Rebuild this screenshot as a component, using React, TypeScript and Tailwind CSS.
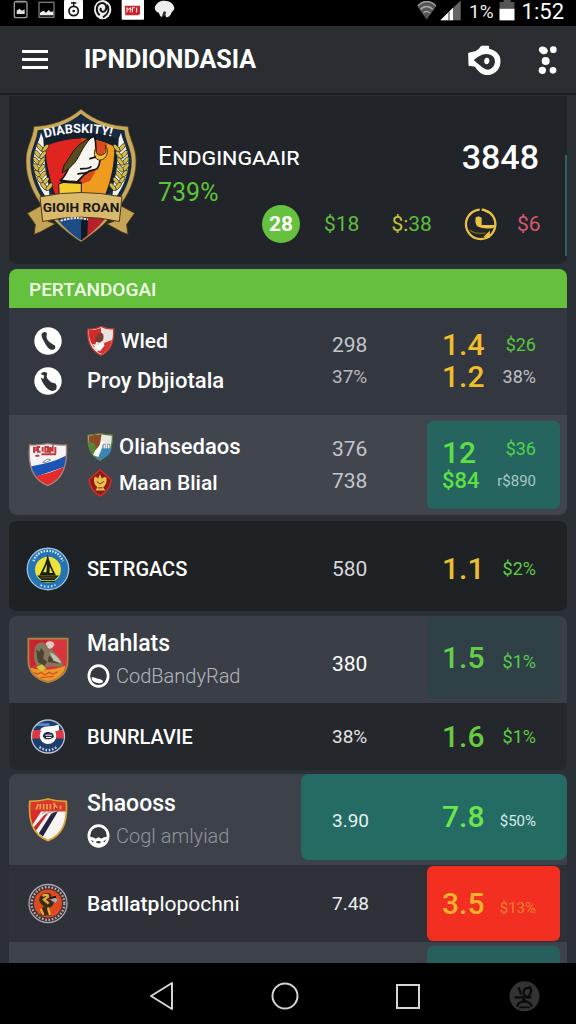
import type { ReactNode } from "react";
import clsx from "clsx";

/* ---------- status bar ---------- */

function StatusBar() {
  return (
    <div className="flex h-[26px] shrink-0 items-start justify-between bg-black px-3 text-white">
      <svg viewBox="36 0 492 60" className="h-5 w-[164px]" aria-hidden>
        <rect x="43" y="4" width="38" height="49" rx="6" fill="none" stroke="#9a9a9a" strokeWidth="4" />
        <path d="M48 8h28" stroke="#666" strokeWidth="3" />
        <path d="M50 42V32l8-6 8 6 8-4v14z" fill="#ddd" />
        <rect x="117" y="7" width="45" height="45" fill="none" stroke="#777" strokeWidth="4" />
        <path d="M120 46v-8l10-6 8 6 8-8 6 6 8-2v12z" fill="#eee" />
        <rect x="192" y="0" width="57" height="57" rx="3" fill="#fff" />
        <circle cx="221" cy="33" r="14" fill="none" stroke="#111" strokeWidth="5" />
        <circle cx="221" cy="33" r="4" fill="#111" />
        <path d="M221 18V5M213 9h16" stroke="#111" strokeWidth="4" />
        <ellipse cx="308" cy="29" rx="26" ry="29" fill="#eee" />
        <path d="M299 46c-14-13-10-34 6-37 14-1 18 16 10 24-9 6-16-2-12-9M321 14c9 16 2 30-12 38" fill="none" stroke="#111" strokeWidth="6" />
        <rect x="365" y="-2" width="67" height="61" rx="3" fill="#fff" />
        <path d="M374 17h46v25l-6 4h-38z" fill="#c9252b" />
        <path d="M381 37V23l5 6 5-6v14M397 37V23h7M410 23v14" fill="none" stroke="#fff" strokeWidth="3" />
        <path d="M464 24c3-14 14-22 29-22 16 0 29 9 30 23-1 7-6 9-9 14-2 8-9 14-16 13l-3-13-5 1-4 11c-5-2-8-6-9-13-7-1-12-6-13-14z" fill="#eee" />
        <path d="M487 46l4-12 8 2-5 12z" fill="#333" />
      </svg>

      <div className="flex items-start">
        <svg viewBox="378 0 132 62" className="h-[21px] w-11" aria-hidden>
          <path d="M379 18c15-21 43-21 57 0l-29 40z" fill="#555" />
          <path d="M381 17c14-17 40-17 53 0M389 28c10-12 26-12 36 0M397 39c6-7 14-7 20 0" fill="none" stroke="#aaa" strokeWidth="4" />
          <path d="M448 60L509 1v59z" fill="#666" />
          <path d="M448 60l38-37v37z" fill="#fff" />
          <path d="M474 34v26" stroke="#333" strokeWidth="3" />
        </svg>
        <span className="ml-2 text-[19px] leading-[23px] text-[#eee]">1%</span>
        <svg viewBox="630 0 46 62" className="ml-[5px] h-[21px] w-4" aria-hidden>
          <path d="M643 0h21v6h11v54h-44V6h12z" fill="#555" />
          <path d="M631 26h44v34h-44z" fill="#fff" />
        </svg>
        <span className="ml-[7px] text-[22px] leading-[23px]">1:52</span>
      </div>
    </div>
  );
}

/* ---------- header ---------- */

function Header() {
  return (
    <header className="flex h-[69px] shrink-0 items-center border-b-2 border-[#1b1d21] bg-[#2a2d32] pl-[22px] pr-[18px] text-white">
      <button type="button" aria-label="Menu" className="flex w-[26px] flex-col gap-[5px]">
        <span className="h-[3px] bg-white" />
        <span className="h-[3px] bg-white" />
        <span className="h-[3px] bg-white" />
      </button>
      <h1 className="ml-9 text-[25px] font-bold leading-8">IPNDIONDASIA</h1>
      <button type="button" aria-label="Watch" className="ml-auto">
        <svg viewBox="540 126 104 98" className="h-8 w-[35px]" aria-hidden>
          <path d="M544 155l22-6c8-4 13-9 17-16h21v9c22 6 36 20 35 38-1 25-20 40-42 39-17-1-25-14-33-25l-19-3z" fill="#fff" stroke="#fff" strokeWidth="4" strokeLinejoin="round" />
          <path d="M559 176c12-11 23-18 38-19 16 0 27 9 27 22 0 14-9 25-23 26-14-3-25-16-42-29z" fill="#2a2d32" />
          <path d="M599 168c6 0 9 5 8 11-1 5-4 9-8 9-5 0-9-4-8-10 0-6 4-10 8-10z" fill="#fff" />
        </svg>
      </button>
      <button type="button" aria-label="More" className="ml-9">
        <svg viewBox="750 130 60 90" className="h-[30px] w-5" aria-hidden>
          <g fill="#fff">
            <ellipse cx="766" cy="146" rx="14" ry="11" transform="rotate(25 766 146)" />
            <circle cx="796" cy="144" r="10" />
            <circle cx="773" cy="178" r="12" />
            <circle cx="763" cy="206" r="11" />
            <circle cx="795" cy="206" r="10" />
          </g>
        </svg>
      </button>
    </header>
  );
}

/* ---------- crests ---------- */

const wheat = [
  [120, 172], [113, 192], [109, 212], [109, 232], [113, 252], [121, 271], [132, 288],
] as const;

function WheatEar() {
  return (
    <g fill="#d8bb45" stroke="#1c2531" strokeWidth="2">
      {wheat.map(([x, y]) => (
        <g key={y}>
          <ellipse cx={x} cy={y} rx="6" ry="14" transform={`rotate(-38 ${x} ${y})`} />
          <ellipse cx={x + 16} cy={y + 2} rx="6" ry="14" transform={`rotate(38 ${x + 16} ${y + 2})`} />
        </g>
      ))}
    </g>
  );
}

function ClubCrest() {
  return (
    <svg viewBox="78 54 336 404" className="h-[135px] w-28 shrink-0" aria-label="Club crest">
      <path d="M243 57c-40 34-90 50-141 52-4 40-24 60-24 104 0 104 88 192 165 242 77-50 165-138 165-242 0-44-20-64-24-104-51-2-101-18-141-52z" fill="#c9a85a" stroke="#5d4a20" strokeWidth="2" />
      <path d="M243 71c-40 32-84 46-130 49-4 36-22 56-22 93 0 96 80 178 152 226 72-48 152-130 152-226 0-37-18-57-22-93-46-3-90-17-130-49z" fill="#172a40" />
      <path d="M123 128c-6 30-22 50-22 85 0 50 22 90 50 124l-10-90-9-96zM363 128c6 30 22 50 22 85 0 50-22 90-50 124l10-90 9-96z" fill="#f3f2ec" />
      <path d="M130 148c36-16 77-24 113-24s77 8 113 24l-6 90c-8 60-50 110-107 150-57-40-99-90-107-150z" fill="#15202d" />
      <path d="M137 168c38-16 72-22 106-23v181l-73-2c-18-45-33-104-33-156z" fill="#e02420" />
      <path d="M243 145c34 1 68 8 100 24 0 60-12 107-32 155h-68z" fill="#ef9b20" />
      <path d="M243 145c34 1 60 6 80 16l-18 47-34 64-28 10z" fill="#d94a1c" />
      <path d="M182 270c30-24 26-66 50-94 14-18 30-30 51-38 8 26 2 34 6 54 16 6 12 30 2 44-14 6-22 2-30 12-14 6-20 22-34 30z" fill="#f7f5ef" stroke="#161616" strokeWidth="5" />
      <path d="M192 226c24-32 28-60 82-84-32 32-34 62-58 84-8 8-20 18-30 22z" fill="#5b4c1d" stroke="#161616" strokeWidth="3" />
      <path d="M288 172c-4 22 14 32 30 14l-2-20c12 14 6 42-16 44-16 0-22-20-12-38z" fill="#eec23a" stroke="#4a2c0c" strokeWidth="3" />
      <path d="M240 236c16-2 26 2 34-8M232 252c12-4 20 0 30-6M268 206l20-6" fill="none" stroke="#161616" strokeWidth="5" />
      <path d="M176 282c20-8 42-14 68-4v44h-66z" fill="#f3cd2c" stroke="#161616" strokeWidth="3" />
      <path d="M182 274l62 4" stroke="#161616" strokeWidth="7" />
      <WheatEar />
      <g transform="translate(486 0) scale(-1 1)">
        <WheatEar />
      </g>
      <path d="M122 148q121-40 242 0" fill="none" id="crestArc" />
      <text fill="#fff" fontSize="38" fontWeight="700" fontFamily="Roboto, sans-serif">
        <textPath href="#crestArc" startOffset="14">DIABSKITY!</textPath>
      </text>
      <path d="M160 370l83 15v66c-32-20-60-46-83-81z" fill="#1d4d86" />
      <path d="M326 370l-83 15v66c32-20 60-46 83-81z" fill="#b5202a" />
      <path d="M243 385h21l-2 50-19 16z" fill="#0f1a27" />
      <path d="M82 369l48-26 14 50 22 8-44 24-20 8 4-30zM404 369l-48-26-14 50-22 8 44 24 20 8-4-30z" fill="#c6a456" stroke="#4b3a18" strokeWidth="3" />
      <path d="M120 320q123-26 246 0l-8 74q-115-26-230 0z" fill="#d9b96c" stroke="#4b3a18" strokeWidth="3" />
      <text x="243" y="366" textAnchor="middle" fill="#1a1712" fontSize="41" fontWeight="700" fontFamily="Roboto, sans-serif">GIOIH ROAN</text>
      <path d="M182 392q40-14 82-4" fill="none" stroke="#e9e4dc" strokeWidth="6" strokeDasharray="7 3" />
    </svg>
  );
}

function PhoneBadge({ flip }: { flip?: boolean }) {
  return (
    <svg viewBox="0 0 84 86" className="h-7 w-7" aria-hidden>
      <circle cx="42" cy="43" r="42" fill="#fff" />
      {flip ? (
        <path d="M20 22c6-8 14-8 20-2-2 6-4 10 2 18 6 8 14 12 22 12 6 6 6 14 2 20-8 6-18 4-26-4-8-8-18-22-20-34l8 6 2-12z" fill="#2f3338" />
      ) : (
        <path d="M22 24c2-8 10-12 16-6 2 6-2 10 0 16 4 12 16 18 24 22 6 6 0 14-6 14-10 0-16-8-22-18-4-8-12-18-12-28z" fill="#2f3338" />
      )}
    </svg>
  );
}

function RedCrest() {
  return (
    <svg viewBox="262 204 82 90" className="h-[30px] w-7 shrink-0" aria-hidden>
      <path d="M264 213c14 2 28-2 39-8 12 6 26 9 38 7 2 40-8 66-38 80-30-14-42-42-39-79z" fill="#e9e2de" stroke="#c5342f" strokeWidth="4" />
      <path d="M267 216c13 1 25-2 36-6v26l-14 14-6 18c-12-14-18-32-16-52z" fill="#cf2b2b" />
      <path d="M284 250c2-14 10-26 20-26 8 4 8 14 4 24l-10 6z" fill="#7c3b30" />
      <path d="M314 254l22-8c-4 20-14 34-30 42l-14-6z" fill="#d23530" />
      <path d="M276 258l20 4 10-8 8 8-14 18z" fill="#fff" />
    </svg>
  );
}

function GreenCrest() {
  return (
    <svg viewBox="262 98 78 84" className="h-7 w-[26px] shrink-0" aria-hidden>
      <path d="M265 104c14 0 26-2 36-5 10 3 24 5 37 5 2 38-8 62-37 76-28-12-38-38-36-76z" fill="#e6eae4" stroke="#5d7a3d" strokeWidth="4" />
      <path d="M268 106l38-4-6 34-24 24c-6-16-9-34-8-54z" fill="#8f4a24" />
      <path d="M268 128c10-4 18 0 20 14l-6 22c-8-10-14-22-14-36z" fill="#4d8b35" />
      <path d="M284 166l26-32 26 10c-4 18-16 28-34 34-6-2-12-6-18-12z" fill="#3b87b4" />
      <path d="M280 164l28-42 6 4-18 44z" fill="#fff" />
      <path d="M308 130h24v14h-24z" fill="#8fa5ae" />
      <path d="M314 134v10M320 130v14M327 134v10" stroke="#fff" strokeWidth="3" />
    </svg>
  );
}

function StarCrest() {
  return (
    <svg viewBox="262 208 76 86" className="h-7 w-[26px] shrink-0" aria-hidden>
      <path d="M300 211l35 30c-4 22-16 40-35 50-19-10-30-28-34-50z" fill="#8f1818" stroke="#cb2e28" strokeWidth="5" strokeLinejoin="round" />
      <path d="M282 236c4-8 10-2 12 2l6-14 6 14c4-6 12-8 14-2 2 12-2 22-10 28l6 10h-30l6-10c-8-6-12-16-10-28z" fill="#e8c04a" />
      <path d="M290 246l10 8 12-8M294 266h14" fill="none" stroke="#7d2a18" strokeWidth="3" />
    </svg>
  );
}

function TricolorCrest() {
  return (
    <svg viewBox="88 136 120 132" className="h-11 w-10" aria-hidden>
      <defs>
        <clipPath id="tri"><path d="M93 142c20 1 36 0 54-4 18 4 36 5 56 4 4 56-8 104-56 122-46-18-60-66-54-122z" /></clipPath>
      </defs>
      <g clipPath="url(#tri)">
        <path d="M88 136h120v132H88z" fill="#f4f4f4" />
        <path d="M88 208c30-6 86-16 120-38v34L92 244z" fill="#1c55b3" />
        <path d="M90 240c30-6 86-18 118-40v70H90z" fill="#e32b2b" />
      </g>
      <path d="M93 142c20 1 36 0 54-4 18 4 36 5 56 4 4 56-8 104-56 122-46-18-60-66-54-122z" fill="none" stroke="#a8807a" strokeWidth="4" />
      <path d="M106 148v18M104 150h12v8h-8M124 148h-6v14h8M132 148v14M140 148h8v14h-8zM154 148v14l8-14v14M170 148v20M110 174h12M128 170h44" fill="none" stroke="#c43a3f" strokeWidth="6" />
      <path d="M132 194l14-10 10 2-12 8z" fill="none" stroke="#8a8f99" strokeWidth="3" />
    </svg>
  );
}

function YellowRoundel() {
  return (
    <svg viewBox="80 431 134 142" className="h-[46px] w-11" aria-hidden>
      <circle cx="147" cy="502" r="64" fill="#2373b5" stroke="#9fc4dd" strokeWidth="4" />
      <circle cx="147" cy="504" r="40" fill="#ece23a" />
      <path d="M102 478q12-32 45-32t46 32" fill="none" stroke="#d4e6f2" strokeWidth="7" strokeDasharray="5 4" />
      <path d="M124 552q22 10 46-1" fill="none" stroke="#d4e6f2" strokeWidth="6" strokeDasharray="5 6" />
      <path d="M146 458c6 20 12 40 26 64h-52c14-24 22-44 26-64z" fill="#1b1f18" />
      <path d="M144 486l-12 26h10zM152 494v20h10z" fill="#ece23a" />
      <path d="M118 524h58l-10 10h-38zM126 540h42" stroke="#1b1f18" strokeWidth="4" fill="#44420f" />
    </svg>
  );
}

function RedShield() {
  return (
    <svg viewBox="84 108 126 138" className="h-[46px] w-[42px]" aria-hidden>
      <path d="M88 113h118v66c0 36-26 56-59 65-33-9-59-29-59-65z" fill="#d9353c" stroke="#a98647" strokeWidth="5" />
      <path d="M92 117h54v60l-50 22c-4-12-4-50-4-82z" fill="#c8262c" />
      <path d="M106 150c0-16 12-28 28-26 4 10 20 8 24 20l30 36 6 18-30-2-44 4c-12-10-18-28-14-50z" fill="#84765c" />
      <path d="M112 146l10 6 4-12 10 14-4 18 12 10-8 14-20-14zM150 164l30 24-34-6z" fill="#4d4333" />
      <path d="M140 128c4-10 24-10 26 2-2 10-12 16-18 12z" fill="#e6c7c5" />
      <path d="M152 154c14 4 28 18 36 32l-24-6z" fill="#c4bfb2" />
      <path d="M94 200c34 10 70 8 105-6-2 24-24 40-52 47-26-7-46-20-53-41z" fill="#e9982a" />
      <path d="M112 198l18-8 12 14-18 6z" fill="#d6c23c" />
      <path d="M104 214l12 6 10-6 12 8 12-8 12 6 14-8M124 230l40-4" fill="none" stroke="#d9541f" strokeWidth="4" />
    </svg>
  );
}

function BlueRoundel() {
  return (
    <svg viewBox="93 352 106 112" className="h-[37px] w-9" aria-hidden>
      <defs>
        <clipPath id="blueRound"><circle cx="146" cy="408" r="50" /></clipPath>
      </defs>
      <g clipPath="url(#blueRound)">
        <path d="M93 352h106v112H93z" fill="#1f3e70" />
        <path d="M93 388h106v26H93z" fill="#dd3742" />
        <path d="M122 390c6-18 32-8 56-18l2 16-26 10z" fill="#fff" />
        <path d="M110 372h40" stroke="#5a86b8" strokeWidth="8" />
      </g>
      <circle cx="146" cy="408" r="50" fill="none" stroke="#b4c4d6" strokeWidth="4" />
      <circle cx="146" cy="406" r="25" fill="#fff" />
      <path d="M130 408c2-12 12-16 22-12 8 0 12 6 12 14l-12 6h-14z" fill="#232b45" />
      <path d="M138 404h20M140 411h16" stroke="#fff" strokeWidth="3" />
      <path d="M120 440q26 18 52 0" fill="none" stroke="#c8d4e2" strokeWidth="7" strokeDasharray="5 5" />
    </svg>
  );
}

function StripeShield() {
  return (
    <svg viewBox="88 112 118 130" className="h-11 w-10" aria-hidden>
      <defs>
        <clipPath id="stripe"><path d="M93 122c20 0 36-2 54-7 18 5 36 7 54 7 4 58-8 98-54 116-46-18-58-58-54-116z" /></clipPath>
      </defs>
      <g clipPath="url(#stripe)">
        <path d="M88 112h118v130H88z" fill="#f7f4f2" />
        <path d="M88 112h118v40H88z" fill="#d8382c" />
        <path d="M88 150h40l-26 40H88z" fill="#d92b2b" />
        <path d="M136 162l12-6-38 54-8-8z" fill="#c3262b" />
        <path d="M158 156l18-4-44 74-12-10z" fill="#20243f" />
      </g>
      <path d="M93 122c20 0 36-2 54-7 18 5 36 7 54 7 4 58-8 98-54 116-46-18-58-58-54-116z" fill="none" stroke="#d9a032" strokeWidth="5" />
      <path d="M112 146l6-16M124 146v-16M134 146v-16M144 146v-16M154 146v-16M166 146v-16l8 12M184 146v-12" stroke="#f0a04a" strokeWidth="5" />
      <path d="M130 160l8-8 6 8 8-8 8 8" fill="none" stroke="#b98" strokeWidth="3" />
    </svg>
  );
}

function OrangeRoundel() {
  return (
    <svg viewBox="86 364 120 128" className="h-[43px] w-10" aria-hidden>
      <circle cx="146" cy="428" r="57" fill="#3a3238" stroke="#a9a8b4" strokeWidth="4" />
      <circle cx="146" cy="428" r="49" fill="none" stroke="#c5a9a4" strokeWidth="7" strokeDasharray="5 5" />
      <circle cx="146" cy="428" r="42" fill="#df4a22" />
      <path d="M120 412c6-14 22-20 32-14 8 6 2 14-6 16l18 10c-2 14-16 16-20 26l12 14h-34c6-10 2-22 12-28-8-6-16-12-14-24z" fill="#3d2d18" />
      <path d="M130 406c8-6 18-4 16 2l-12 8 14 12M124 444l8 18M146 440l6 22" fill="none" stroke="#e6a93c" strokeWidth="7" />
      <path d="M156 418c0-10 16-10 18 0l-6 8z" fill="#8fb3cc" />
      <path d="M150 412l20-4" stroke="#111" strokeWidth="5" />
    </svg>
  );
}

function FanIcon({ split }: { split?: boolean }) {
  return (
    <svg viewBox="262 192 68 72" className="h-6 w-[23px] shrink-0" aria-hidden>
      <ellipse cx="296" cy="228" rx="29" ry="31" fill="#34383f" stroke="#fff" strokeWidth="8" />
      {split ? (
        <path d="M268 228c8 6 14 2 18 8l10-4 10 4c4-6 10-2 18-8-2 8-8 14-14 16l8 8c-12 10-32 10-44 0l8-8c-8-2-12-8-14-16z" fill="#fff" />
      ) : (
        <path d="M276 232c8-2 12 4 20 4 8 2 14 4 14 10-8 6-24 4-30-2-4-4-6-8-4-12z" fill="#fff" />
      )}
      {split && <path d="M288 246c4-4 12-4 16 0l-4 4h-8z" fill="#34383f" />}
    </svg>
  );
}

function ClockIcon() {
  return (
    <svg viewBox="664 340 104 110" className="-mr-[13px] h-9 w-[34px] shrink-0" aria-hidden>
      <circle cx="715" cy="396" r="45" fill="none" stroke="#ecc243" strokeWidth="7" />
      <path d="M715 340v20" stroke="#212428" strokeWidth="6" />
      <path d="M700 374c6-4 14-2 18 2v22h40l-4 9c-18 4-36 2-48-4-8-8-8-20-6-29z" fill="#ecc243" />
      <path d="M722 350l18 10M730 432l10-10v12z" stroke="#ecc243" strokeWidth="6" fill="#ecc243" />
      <path d="M682 414c14 10 28 12 48 8" fill="none" stroke="#7d6828" strokeWidth="4" />
    </svg>
  );
}

/* ---------- summary ---------- */

function Summary() {
  return (
    <section className="relative flex h-[168px] shrink-0 rounded-b-lg bg-[#212428] pl-[17px] pr-7 pt-3">
      <ClubCrest />
      <div className="ml-5 flex min-w-0 flex-1 flex-col">
        <div className="mt-[35px] flex items-center justify-between">
          <h2 className="text-[25px] leading-7 text-white [font-variant-caps:small-caps]">Endgingaair</h2>
          <span className="text-[34px] font-medium leading-7 text-white">3848</span>
        </div>
        <p className="mt-[10px] text-[25px] leading-6 text-[#5fc43a]">739%</p>
        <div className="flex items-center gap-8 pl-[104px] text-[21px] leading-7">
          <span className="-mr-2 flex h-[38px] w-[38px] shrink-0 items-center justify-center rounded-full bg-[#66c13e] font-bold text-white">
            28
          </span>
          <span className="text-[#5fbe3e]">$18</span>
          <span className="text-[#5fbe3e]">
            <span className="text-[#c4c437]">$:</span>38
          </span>
          <ClockIcon />
          <span className="text-[#d9596e]">$6</span>
        </div>
      </div>
      <span className="absolute right-0 top-[59px] h-[101px] w-[2px] bg-[#2f6464]" />
    </section>
  );
}

/* ---------- table rows ---------- */

type RowProps = {
  badge?: ReactNode;
  names: ReactNode;
  stats?: ReactNode;
  odds?: ReactNode;
  shares?: ReactNode;
  className: string;
  panel?: string;
  wide?: string;
};

function Row({ badge, names, stats, odds, shares, className, panel, wide }: RowProps) {
  return (
    <div className={clsx("flex shrink-0 items-stretch overflow-hidden", className)}>
      <div className="flex w-[78px] shrink-0 flex-col items-center justify-center gap-3">{badge}</div>
      <div className="flex min-w-0 flex-1 flex-col justify-center whitespace-nowrap text-[21px] font-medium leading-7 text-white">
        {names}
      </div>
      <div className={clsx("flex w-[266px] shrink-0", wide)}>
        <div className="flex w-[126px] flex-col justify-center gap-1 pl-[31px] text-[21px] leading-7">{stats}</div>
        <div className={clsx("mr-[7px] flex flex-1 items-center justify-between pl-[15px] pr-6", panel)}>
          <div className="text-[30px] font-medium leading-8">{odds}</div>
          <div className="flex flex-col gap-1 text-right text-[18px] leading-7">{shares}</div>
        </div>
      </div>
    </div>
  );
}

function NameLine({ icon, children, className }: { icon?: ReactNode; children: ReactNode; className?: string }) {
  return (
    <div className={clsx("flex items-center gap-[6px]", className)}>
      {icon}
      <span>{children}</span>
    </div>
  );
}

function Standings() {
  return (
    <section className="mt-[5px] flex min-h-0 flex-1 flex-col overflow-hidden">
      <h3 className="h-[39px] shrink-0 rounded-t-lg bg-[#64c03d] pl-5 text-[19px] font-medium leading-[42px] text-[#f2ffe9]">
        PERTANDOGAI
      </h3>
      <Row
        className="h-[107px] bg-[#333840] pb-[2px]"
        badge={<><PhoneBadge /><PhoneBadge flip /></>}
        names={
          <div className="flex flex-col gap-3">
            <NameLine icon={<RedCrest />} className="h-7">Wled</NameLine>
            <NameLine className="h-7 text-[22px]">Proy Dbjiotala</NameLine>
          </div>
        }
        stats={<><span className="text-[#c3c6ca]">298</span><span className="text-[19px] text-[#b6babf]">37%</span></>}
        odds={<><p className="text-[#f1bd2c]">1.4</p><p className="text-[#f1bd2c]">1.2</p></>}
        shares={<><span className="text-[#58c53d]">$26</span><span className="text-[#bdc1c5]">38%</span></>}
      />
      <Row
        className="h-[100px] rounded-b-lg bg-[#40454e]"
        badge={<TricolorCrest />}
        names={
          <div className="flex flex-col gap-2">
            <NameLine icon={<GreenCrest />} className="h-7 text-[22px]">Oliahsedaos</NameLine>
            <NameLine icon={<StarCrest />} className="h-7">Maan Blial</NameLine>
          </div>
        }
        stats={<><span className="text-[#c3c6ca]">376</span><span className="text-[#c3c6ca]">738</span></>}
        panel="my-[6px] rounded-md bg-[#25645f]"
        odds={<><p className="text-[#5ee045]">12</p><p className="text-[22px] leading-6 text-[#5ee045]">$84</p></>}
        shares={<><span className="text-[#4fd448]">$36</span><span className="text-[15px] text-[#a9c8c8]">r$890</span></>}
      />

      <Row
        className="mt-[6px] h-[90px] rounded-lg bg-[#1f2225] pt-[6px]"
        badge={<YellowRoundel />}
        names={<span className="text-[20px]">SETRGACS</span>}
        stats={<span className="text-[#d5d7d9]">580</span>}
        odds={<p className="text-[#e9bf32]">1.1</p>}
        shares={<span className="text-[#5fcb44]">$2%</span>}
      />

      <Row
        className="mt-[5px] h-[87px] rounded-t-lg bg-[#3a3f47]"
        badge={<RedShield />}
        names={
          <div className="flex flex-col gap-1">
            <NameLine className="h-7 text-[23px]">Mahlats</NameLine>
            <NameLine icon={<FanIcon />} className="h-7 text-[20px] font-light text-[#b3b7bc]">CodBandyRad</NameLine>
          </div>
        }
        stats={<span className="pt-2 text-white">380</span>}
        panel="mb-1 rounded-md bg-[#2f4147]"
        odds={<p className="text-[#62cf45]">1.5</p>}
        shares={<span className="pt-2 text-[#58c94a]">$1%</span>}
      />
      <Row
        className="h-[67px] rounded-b-lg bg-[#24272b]"
        badge={<BlueRoundel />}
        names={<span className="text-[20px]">BUNRLAVIE</span>}
        stats={<span className="text-[19px] text-[#e2e4e6]">38%</span>}
        odds={<p className="text-[#66cb3f]">1.6</p>}
        shares={<span className="text-[#5fcb44]">$1%</span>}
      />

      <Row
        className="mt-1 h-[91px] rounded-t-lg bg-[#3d424a]"
        badge={<StripeShield />}
        names={
          <div className="flex flex-col gap-1">
            <NameLine className="h-7 text-[23px]">Shaooss</NameLine>
            <NameLine icon={<FanIcon split />} className="h-7 text-[20px] font-light text-[#8f959c]">Cogl amlyiad</NameLine>
          </div>
        }
        wide="mb-[5px] rounded-lg bg-[#246b64]"
        stats={<span className="pt-2 text-[19px] text-[#e6f2f1]">3.90</span>}
        odds={<p className="text-[#6be54a]">7.8</p>}
        shares={<span className="pt-2 text-[15px] text-[#d3ebe8]">$50%</span>}
      />
      <Row
        className="h-[77px] bg-[#2e3138]"
        badge={<OrangeRoundel />}
        names={<span>Batllatp<span className="font-normal">lopochni</span></span>}
        stats={<span className="text-[19px] text-[#eceded]">7.48</span>}
        panel="my-[1px] rounded-md bg-[#f22f20]"
        odds={<p className="text-[#ffb52a]">3.5</p>}
        shares={<span className="pt-2 text-[15px] text-[#f0812f]">$13%</span>}
      />
      <Row
        className="h-[91px] bg-[#3d424a]"
        names={<NameLine className="h-[60px] items-start font-normal">Dralonicanad</NameLine>}
        panel="my-1 rounded-md bg-[#285e5b]"
      />
    </section>
  );
}

/* ---------- system navigation ---------- */

function NavBar() {
  return (
    <nav className="flex h-[61px] shrink-0 items-center gap-24 bg-black pl-[149px] pr-9 pt-1 text-[#d4d4d4]">
      <button type="button" aria-label="Back">
        <svg viewBox="0 0 26 30" className="h-[30px] w-[26px]" fill="none" stroke="currentColor" strokeWidth="2" strokeLinejoin="round">
          <path d="M23 2v26L2 15z" />
        </svg>
      </button>
      <button type="button" aria-label="Home">
        <svg viewBox="0 0 28 28" className="h-7 w-7" fill="none" stroke="currentColor" strokeWidth="2">
          <circle cx="14" cy="14" r="12.500" />
        </svg>
      </button>
      <button type="button" aria-label="Recent apps">
        <svg viewBox="0 0 26 26" className="h-[26px] w-[26px]" fill="none" stroke="currentColor" strokeWidth="2">
          <path d="M2 2h22v23H2z" />
        </svg>
      </button>
      <button type="button" aria-label="Assistant" className="-ml-2">
        <svg viewBox="660 658 92 96" className="h-8 w-[31px]">
          <circle cx="706" cy="707" r="45" fill="#333" />
          <path d="M688 680l8 22M722 680c8 10 2 24-8 30-12-4-14-18-6-26zM676 710h50M684 738c4-20 38-20 44 0M700 716l14 8" fill="none" stroke="#0b0b0b" strokeWidth="7" />
          <path d="M690 740h32" stroke="#0b0b0b" strokeWidth="5" />
        </svg>
      </button>
    </nav>
  );
}

export default function App() {
  return (
    <div className="flex h-screen flex-col overflow-hidden bg-[#2b3037] font-['Roboto',sans-serif]">
      <StatusBar />
      <Header />
      <main className="flex min-h-0 flex-1 flex-col px-[9px] pt-px">
        <Summary />
        <Standings />
      </main>
      <NavBar />
    </div>
  );
}
